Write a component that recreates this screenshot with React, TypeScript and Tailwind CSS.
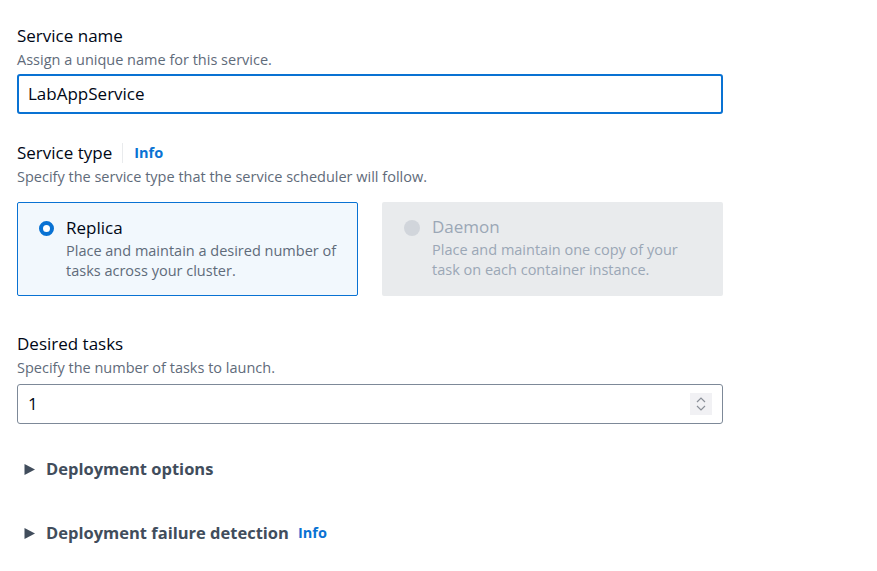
import React from "react";

function Caret() {
  return (
    <svg width="13" height="13" viewBox="0 0 13 13" className="shrink-0">
      <path d="M1.5 1 L12 6.5 L1.5 12 Z" fill="#414d5c" />
    </svg>
  );
}

export default function App() {
  return (
    <div
      className="w-[877px] h-[571px] bg-white overflow-hidden"
      style={{ fontFamily: '"Open Sans", "Noto Sans", sans-serif' }}
    >
      <div className="pl-[17px] w-[723px] pt-[25px]">
        {/* Service name */}
        <div className="text-[17px] leading-[22px] text-[#000716]">Service name</div>
        <div className="mt-[3px] text-[14.5px] leading-[20px] text-[#5f6b7a]">
          Assign a unique name for this service.
        </div>
        <div className="mt-[4px] h-[40px] border-2 border-[#0972d3] rounded-[3px] flex items-center pl-[9px] text-[17px] text-[#000716]">
          LabAppService
        </div>

        {/* Service type */}
        <div className="mt-[28px] flex items-center h-[22px]">
          <span className="text-[17px] leading-[22px] text-[#000716]">Service type</span>
          <span className="ml-[10px] w-px h-[20px] bg-[#e9ebed]" />
          <span className="ml-[11px] text-[14.5px] font-bold text-[#0972d3]">Info</span>
        </div>
        <div className="mt-[3px] text-[14.5px] leading-[20px] text-[#5f6b7a]">
          Specify the service type that the service scheduler will follow.
        </div>
        <div className="mt-[15px] grid grid-cols-2 gap-[24px]">
          <div className="h-[94px] border border-[#0972d3] bg-[#f2f8fd] rounded-[2px] pl-[21px] pt-[14px] flex gap-[12px]">
            <div className="mt-[4px] w-[15px] h-[15px] rounded-full border-[4px] border-[#0972d3] bg-white shrink-0" />
            <div>
              <div className="text-[17px] leading-[22px] text-[#000716]">Replica</div>
              <div className="mt-[2px] text-[14.5px] leading-[20px] text-[#5f6b7a] pr-[12px]">
                Place and maintain a desired number of tasks across your cluster.
              </div>
            </div>
          </div>
          <div className="h-[94px] bg-[#e9ebed] rounded-[2px] pl-[22px] pt-[14px] flex gap-[12px]">
            <div className="mt-[4px] w-[16px] h-[16px] rounded-full bg-[#d1d5db] shrink-0" />
            <div>
              <div className="text-[17px] leading-[22px] text-[#9ba7b6]">Daemon</div>
              <div className="mt-[2px] text-[14.5px] leading-[20px] text-[#9ba7b6] pr-[30px]">
                Place and maintain one copy of your task on each container instance.
              </div>
            </div>
          </div>
        </div>

        {/* Desired tasks */}
        <div className="mt-[37px] text-[17px] leading-[22px] text-[#000716]">Desired tasks</div>
        <div className="mt-[3px] text-[14.5px] leading-[20px] text-[#5f6b7a]">
          Specify the number of tasks to launch.
        </div>
        <div className="mt-[6px] h-[40px] border border-[#7d8998] rounded-[3px] flex items-center pl-[10px] pr-[10px] text-[17px] text-[#000716]">
          <span className="flex-1">1</span>
          <div className="w-[22px] h-[22px] bg-[#f1f1f4] flex flex-col items-center justify-center gap-[2px]">
            <svg width="10" height="6" viewBox="0 0 10 6">
              <path d="M1 5 L5 1 L9 5" fill="none" stroke="#8a8f98" strokeWidth="1.2" />
            </svg>
            <svg width="10" height="6" viewBox="0 0 10 6">
              <path d="M1 1 L5 5 L9 1" fill="none" stroke="#8a8f98" strokeWidth="1.2" />
            </svg>
          </div>
        </div>

        {/* Deployment options */}
        <div className="mt-[34px] h-[22px] flex items-center pl-[6px] gap-[10px]">
          <Caret />
          <span className="text-[16.5px] leading-[22px] font-bold text-[#414d5c]">Deployment options</span>
        </div>

        <div className="mt-[42px] h-[22px] flex items-center pl-[6px] gap-[10px]">
          <Caret />
          <span className="text-[16.5px] leading-[22px] font-bold text-[#414d5c]">
            Deployment failure detection
          </span>
          <span className="ml-[-1px] text-[14.5px] font-bold text-[#0972d3]">Info</span>
        </div>
      </div>
    </div>
  );
}
